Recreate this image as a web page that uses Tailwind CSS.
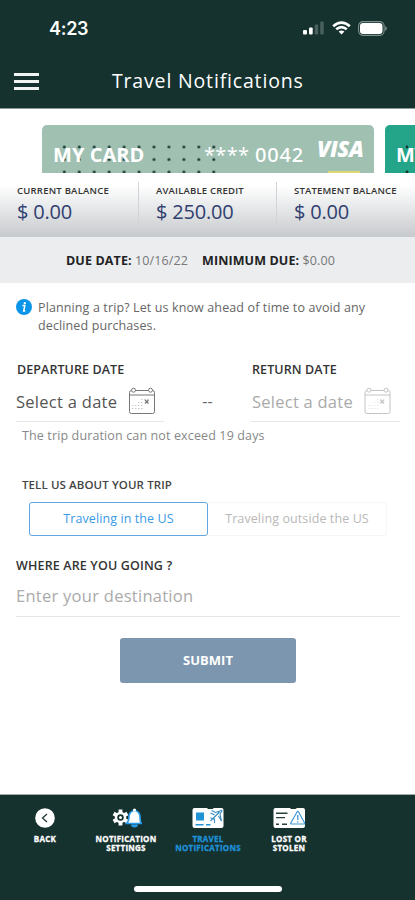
<!DOCTYPE html>
<html lang="en">
<head>
<meta charset="utf-8">
<title>Travel Notifications</title>
<script src="https://cdn.jsdelivr.net/npm/@tailwindcss/browser@4"></script>
</head>
<body class="bg-white">
<div class="w-[415px] h-[900px] overflow-hidden flex flex-col bg-white font-['Open_Sans',sans-serif] whitespace-nowrap">
  <header class="h-[109px] shrink-0 bg-[#16322f] border-b border-[#8b9997] text-white">
    <div class="h-14 flex items-center justify-between pl-[49px] pr-[28px]">
      <span class="pt-px font-['Inter',sans-serif] font-semibold text-[18px] leading-5 tracking-[-0.3px]">4:23</span>
      <div class="flex items-center">
        <svg width="21" height="14" viewBox="0 0 21 14" class="mr-[8px]"><rect x="0" y="9" width="4" height="4.500" rx="1" fill="#fff"/><rect x="6" y="6.500" width="3.700" height="7" rx="1" fill="#fff"/><rect x="11.700" y="3.500" width="3.500" height="10" rx="1" fill="#49605e"/><rect x="17.200" y="0.500" width="3.500" height="13" rx="1" fill="#49605e"/></svg>
        <svg width="19" height="14" viewBox="0 0 19 14" class="mr-[7px]" fill="none" stroke="#fff" stroke-width="2.600"><path d="M1.200 5.300Q9.500-2.200 17.800 5.300"/><path d="M4.200 8.300Q9.500 3.800 14.800 8.300"/><path d="M9.500 13.500L6.600 10.600Q9.500 8.500 12.400 10.600Z" fill="#fff" stroke="none"/></svg>
        <svg width="29" height="15" viewBox="0 0 29 15"><rect x="0.600" y="0.600" width="25.500" height="13.800" rx="4.300" fill="none" stroke="#7e908e" stroke-width="1.100"/><rect x="2" y="2" width="22.500" height="11" rx="3" fill="#fff"/><path d="M27.200 5q1.600 .7 1.600 2.500t-1.600 2.500z" fill="#7e908e"/></svg>
      </div>
    </div>
    <div class="h-[50px] flex items-center">
      <div class="ml-[14px] w-[25px] flex flex-col gap-[4px]">
        <div class="h-[3px] bg-[#f1f3f3]"></div><div class="h-[3px] bg-[#f1f3f3]"></div><div class="h-[3px] bg-[#f1f3f3]"></div>
      </div>
      <h1 class="ml-[73px] text-[19.500px] leading-6 font-medium tracking-[0.83px] [font-variant-ligatures:none]">Travel Notifications</h1>
    </div>
  </header>

  <section class="h-16 shrink-0 pt-4 pl-[42px] flex gap-[11px]">
    <div class="relative w-[332px] h-12 shrink-0 rounded-t-[5px] bg-[#a0c0b2] overflow-hidden text-white">
      <svg class="absolute left-0 top-0" width="332" height="48" fill="#17382f"><defs><pattern id="dots" x="14.800" y="15.500" width="14.950" height="12.500" patternUnits="userSpaceOnUse"><circle cx="7.500" cy="6.500" r="1.500"/></pattern></defs><rect x="15" y="16" width="165" height="32" fill="url(#dots)"/></svg>
      <div class="relative flex h-12 pl-[11px] pt-[18px] leading-6">
        <span class="w-[151px] text-[20px] font-bold tracking-[0.05px]">MY CARD</span>
        <span class="w-[51px] text-[20px] tracking-[0.3px]">****</span>
        <span class="font-['Noto_Sans',sans-serif] text-[20px] font-medium tracking-[0.8px]">0042</span>
      </div>
      <span class="absolute left-[275px] top-[11px] text-[22px] leading-6 font-extrabold italic tracking-[-0.500px]">VISA</span>
      <div class="absolute left-[286px] top-[46px] w-8 h-[2px] bg-[#dcd974]"></div>
    </div>
    <div class="relative w-[332px] h-12 shrink-0 rounded-t-[5px] bg-[#24a58a] overflow-hidden text-white">
      <svg class="absolute left-0 top-0" width="60" height="48" fill="#17382f"><circle cx="22" cy="22" r="1.400"/><circle cx="22" cy="47" r="1.400"/></svg>
      <span class="relative block pl-[11px] pt-[18px] text-[20px] leading-6 font-bold tracking-[-0.6px]">MY CARD</span>
    </div>
  </section>

  <section class="h-16 shrink-0 flex bg-linear-to-b from-white from-20% to-[#c7cacd]">
    <div class="w-[138px] pl-[17px] pt-[11px]"><div class="text-[9.500px] leading-[14px] font-semibold text-[#333] tracking-[0.23px]">CURRENT BALANCE</div><div class="text-[20px] leading-7 text-[#303e70] tracking-[-0.2px]">$ 0.00</div></div>
    <div class="w-[138px] pl-[18px] pt-[11px] relative"><i class="absolute left-0 top-[9px] h-[42px] w-px bg-[#d0d3d7]"></i><div class="text-[9.500px] leading-[14px] font-semibold text-[#333] tracking-[0.2px]">AVAILABLE CREDIT</div><div class="text-[20px] leading-7 text-[#303e70] tracking-[-0.2px]">$ 250.00</div></div>
    <div class="w-[139px] pl-[18px] pt-[11px] relative"><i class="absolute left-0 top-[9px] h-[42px] w-px bg-[#d0d3d7]"></i><div class="text-[9.500px] leading-[14px] font-semibold text-[#333] tracking-[0.18px]">STATEMENT BALANCE</div><div class="text-[20px] leading-7 text-[#303e70] tracking-[-0.2px]">$ 0.00</div></div>
  </section>

  <section class="h-[46px] shrink-0 bg-[#ebedef] flex items-center pl-[66px] pt-[2px] text-[12.500px] tracking-[0.12px] text-[#777]">
    <div class="w-[136px]"><b class="text-[#222]">DUE DATE:</b> 10/16/22</div>
    <div><b class="text-[#222]">MINIMUM DUE:</b> $0.00</div>
  </section>

  <main class="h-[511px] shrink-0 flex flex-col">
    <div class="flex pt-[16px] pl-4 h-[77px]">
      <svg class="mr-[6px] shrink-0" width="16" height="16" viewBox="0 0 16 16"><circle cx="8" cy="8" r="8" fill="#0b95e8"/><circle cx="8.800" cy="4.100" r="1.200" fill="#fff"/><path d="M6.400 6.500h2.400L7.700 12h1.500" fill="none" stroke="#fff" stroke-width="1.500"/></svg>
      <p class="text-[12.500px] leading-[17.500px] text-[#666] tracking-[0.12px]">Planning a trip? Let us know ahead of time to avoid any<br>declined purchases.</p>
    </div>
    <div class="flex h-[62px] pl-4">
      <div class="w-[148px] border-b border-[#e6e6e6]">
        <div class="h-[18px] pt-px pl-px leading-[18px] text-[12.500px] font-semibold text-[#333] tracking-[0.08px]">DEPARTURE DATE</div>
        <div class="flex items-center pt-[9px]"><span class="w-[112px] pt-px text-[16.500px] leading-6 text-[#555] tracking-[0.28px]">Select a date</span>
          <svg class="text-[#777]" width="28" height="28" viewBox="0 0 28 28" fill="none" stroke="currentColor"><rect x="1.500" y="3.500" width="25" height="23" rx="2"/><path d="M1.500 8h25"/><circle cx="5.500" cy="3.200" r="2" fill="#fff"/><circle cx="22.500" cy="3.200" r="2" fill="#fff"/><path d="M13 12.500h8M10 15.500h6M4 18.500h12M4 21.500h12" stroke-dasharray="1.500 1.500" opacity=".4"/><path d="m17 13 3.500 3.500m0-3.500L17 16.500" stroke-width="1.300"/></svg></div>
      </div>
      <span class="w-[87px] pt-[31px] text-center text-[#666] text-[16px] leading-5">--</span>
      <div class="w-[149px] pl-px border-b border-[#e6e6e6]">
        <div class="h-[18px] pt-px leading-[18px] text-[12.500px] font-semibold text-[#333] tracking-[0.1px]">RETURN DATE</div>
        <div class="flex items-center pt-[9px]"><span class="w-[112px] pt-px text-[16.500px] leading-6 text-[#aaa] tracking-[0.25px]">Select a date</span>
          <svg class="text-[#c4c4c4]" width="28" height="28" viewBox="0 0 28 28" fill="none" stroke="currentColor"><rect x="1" y="3.500" width="25" height="23" rx="2"/><path d="M1 8h25"/><circle cx="5" cy="3.200" r="2" fill="#fff"/><circle cx="22" cy="3.200" r="2" fill="#fff"/><path d="M13 12.500h8M10 15.500h6M4 18.500h12M4 21.500h12" stroke-dasharray="1.500 1.500" opacity=".4"/><path d="m16.500 13 3.500 3.500m0-3.500-3.500 3.500" stroke-width="1.300"/></svg></div>
      </div>
    </div>
    <p class="h-[54px] pt-[5px] pl-[22px] text-[12.500px] leading-[18px] text-[#888] tracking-[0.13px]">The trip duration can not exceed 19 days</p>
    <div class="h-[26px] pl-[22px] text-[11.500px] leading-[18px] font-semibold text-[#444] tracking-[0.1px]">TELL US ABOUT YOUR TRIP</div>
    <div class="flex pl-[29px] h-[54px] text-[12.500px] tracking-[0.1px]">
      <button class="w-[179px] h-[34px] border border-[#62a5e3] rounded-[3px] text-[#3a9ae5]">Traveling in the US</button>
      <button class="w-[179px] h-[34px] border border-l-0 border-[#f6f6f6] rounded-r-[3px] text-[#b8b8b8]">Traveling outside the US</button>
    </div>
    <div class="ml-4 w-[384px] h-[61px] border-b border-[#e5e5e5]">
      <div class="h-[18px] pt-px leading-[18px] text-[12.500px] font-semibold text-[#333] tracking-[0.15px]">WHERE ARE YOU GOING ?</div>
      <div class="pt-[10px] text-[16.500px] leading-6 text-[#aaa] tracking-[0.27px]">Enter your destination</div>
    </div>
    <button class="mt-[21px] ml-[120px] w-[176px] h-[45px] rounded-[3px] bg-[#7d96b0] text-white text-[13px] font-bold">SUBMIT</button>
  </main>

  <footer class="h-[106px] shrink-0 bg-[#16322f] border-t border-[#a2adab] text-white flex flex-col">
    <nav class="flex pl-[5px] pt-[12px] h-[91px] text-[8px] leading-[8.500px] font-bold text-center tracking-[0.25px] [-webkit-text-stroke:0.3px_currentColor]">
      <div class="w-20 flex flex-col items-center gap-[6px]"><svg width="20" height="22" viewBox="0 0 20 22"><circle cx="10" cy="11" r="9.800" fill="#fff"/><path d="m12 7-4.500 4 4.500 4" fill="none" stroke="#16322f" stroke-width="1.200"/></svg><span>BACK</span></div>
      <div class="w-[82px] flex flex-col items-center gap-[6px]"><svg width="32" height="22" viewBox="0 0 32 22"><g fill="none" stroke="#fff"><path d="M10.500 2.500v16M3.600 6.500l13.800 8M3.600 14.500l13.800-8" stroke-width="3.800"/><circle cx="10.500" cy="10.500" r="4.500" fill="#16322f" stroke-width="2.500"/></g><circle cx="10.500" cy="10.500" r="1.500" fill="#fff"/><path d="M16.500 16.500q2.500-2 2.500-7Q19.500 4 24.500 3.500 29.500 4 30 9.500q0 5 1.300 7Z" fill="#fff" stroke="#2a9be8" stroke-width="1.600"/><circle cx="24.500" cy="3" r="1.600" fill="#fff"/><path d="M21 17.500a3.500 3 0 0 0 7 0" fill="#2a9be8"/></svg><span>NOTIFICATION<br>SETTINGS</span></div>
      <div class="w-[82px] flex flex-col items-center gap-[6px] text-[#1e91d8]"><svg width="32" height="22" viewBox="0 0 32 22"><path d="M2.500 1h13v1h5L22 1h7.500q2 0 2 2v16q0 2-2 2h-27q-2 0-2-2V3q0-2 2-2Z" fill="#fff"/><path d="M4 5.500h8v8H4zM3.500 17h8v1.500h-8zM14 17h4.500v1.500H14z" fill="#2193d5"/><path d="m18.500 14 9-9m-8-1.500 4 2 4.500-1.500q1.500-1.500 2 0l-2 3 1.500 7-3-5m-8-3 4 2m-4 3 4 1v4" fill="none" stroke="#358cc3" stroke-width="1.100"/></svg><span>TRAVEL<br>NOTIFICATIONS</span></div>
      <div class="w-20 flex flex-col items-center gap-[6px]"><svg width="33" height="22" viewBox="0 0 33 22"><path d="M2.500 1h15v1h5L24 1h6q2 0 2 2v16q0 2-2 2H2.500q-2 0-2-2V3q0-2 2-2Z" fill="#fff"/><path d="M3 5.500h11.500V7H3zM3 10h9v1.200H3zM3 16.500h3V18H3zM9 16.500h5V18H9z" fill="#29403d"/><path d="M24 5q.8-1.300 1.600 0l6 11q.5 1-.7 1H18.500q-1.200 0-.7-1Z" fill="#fff" stroke="#3e96d6" stroke-width="1.200"/><path d="M24.800 8v5m0 1.200v1.200" stroke="#3e96d6" stroke-width="1.300"/></svg><span>LOST OR<br>STOLEN</span></div>
    </nav>
    <div class="ml-[134px] w-[148px] h-[6px] rounded-full bg-white"></div>
  </footer>
</div>
</body>
</html>
